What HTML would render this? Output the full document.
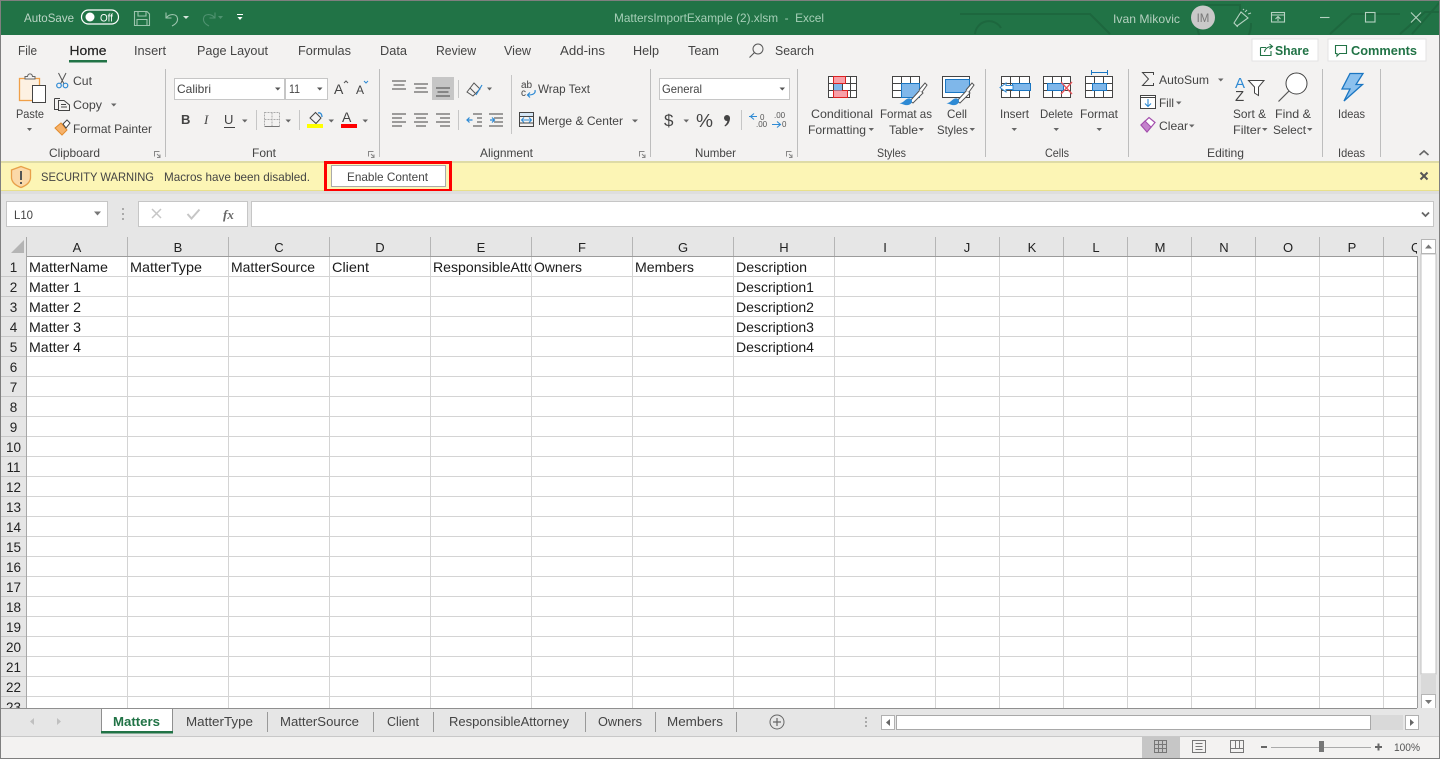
<!DOCTYPE html>
<html><head><meta charset="utf-8"><title>MattersImportExample (2).xlsm - Excel</title>
<style>
html,body{margin:0;padding:0;background:#e6e6e6;overflow:hidden}
svg{display:block;font-family:"Liberation Sans",sans-serif}
text{white-space:pre}
.r{font-size:12px;fill:#444}
.tb{font-size:13px;fill:#444}
.c{font-size:14px;fill:#1a1a1a}
.h{font-size:13px;fill:#222;text-anchor:middle}
.n{font-size:13.5px;fill:#222;text-anchor:middle}
.s{font-size:13px;fill:#555}
.crisp line,.crisp rect,.crisp path{shape-rendering:crispEdges}
</style></head><body>
<svg width="1440" height="759" viewBox="0 0 1440 759" xmlns="http://www.w3.org/2000/svg">
<defs>
<clipPath id="ce"><rect x="431" y="257" width="100" height="20"/></clipPath>
<clipPath id="cq"><rect x="1384" y="237" width="33" height="20"/></clipPath>
<clipPath id="tb"><rect x="960" y="1" width="479" height="34"/></clipPath>
</defs>

<rect width="1440" height="759" fill="#e6e6e6"/>
<!-- title bar -->
<rect x="0" y="0" width="1440" height="35" fill="#217346"/>
<g clip-path="url(#tb)" fill="none" stroke="#1d673e" stroke-width="2">
<path d="M960 14H1090L1110 34M1205 5L1240 5 1240 18 M1205 5a27 27 0 1 0 46 18M1400 34L1425 12H1440M1330 34L1352 14H1400M975 34a14 14 0 0 1 26-6"/>
<path d="M1440 2L1412 34"/>
</g>
<text x="24" y="22" font-size="12" fill="#bcd5c6" textLength="50" lengthAdjust="spacingAndGlyphs">AutoSave</text>
<rect x="81.500" y="10" width="37" height="14" rx="7" fill="#217346" stroke="#fff" stroke-width="1.200"/>
<circle cx="90" cy="17" r="4.500" fill="#fff"/>
<text x="100" y="21.500" font-size="11" fill="#fff" textLength="13" lengthAdjust="spacingAndGlyphs">Off</text>
<g fill="none" stroke="#9cc4ad" stroke-width="1.100">
<path d="M134.500 11.500H147L149.500 14V25.500H134.500ZM138 11.500V16H146V11.500M137 25.500V19.500H147V25.500"/>
<path d="M166 12.500V18H171.500M166.500 17.500C170 13.500 177 13.500 177.500 18.500C178 22 175 24.500 172 26"/>
</g>
<path d="M183 16h6l-3 3z" fill="#d5e5db"/>
<path d="M215 12.500V18H209.500M214.500 17.500C211 13.500 204 13.500 203.500 18.500C203 22 206 24.500 209 26" fill="none" stroke="#4f9270" stroke-width="1.100"/>
<path d="M218 16h5l-2.500 3z" fill="#4f9270"/>
<path d="M237 14h6v1h-6zM237.500 17h5l-2.500 3z" fill="#fff"/>
<text x="614" y="22" font-size="12" fill="#a6cfb7" textLength="210" lengthAdjust="spacingAndGlyphs">MattersImportExample (2).xlsm  -  Excel</text>
<text x="1113" y="23" font-size="12" fill="#b4d0bf" textLength="67" lengthAdjust="spacingAndGlyphs">Ivan Mikovic</text>
<circle cx="1203" cy="17.500" r="12" fill="#c9c9c9"/>
<text x="1203" y="22" font-size="11.500" fill="#777" text-anchor="middle">IM</text>
<g fill="none" stroke="#b5d2c1" stroke-width="1.100">
<path d="M1234 23L1241 12 1248 18 1237 26ZM1238 25l-1 2M1245 12l2-2M1248 14l3-1M1243 10l1-1"/>
<rect x="1271.500" y="12.500" width="13" height="9.500"/><path d="M1271.500 15H1284.500M1278 21v-4M1275.500 19l2.500-2.500 2.500 2.500"/>
<path d="M1320 17.500H1329.500"/>
<rect x="1365.500" y="12.500" width="9.500" height="9.500"/>
<path d="M1411 12.500L1421 22.500M1421 12.500L1411 22.500"/>
</g>

<!-- ribbon -->
<rect x="0" y="35" width="1440" height="127" fill="#f3f2f1"/>
<g class="tb">
<text x="18" y="55" textLength="19" lengthAdjust="spacingAndGlyphs">File</text>
<text x="69.500" y="55" textLength="37" lengthAdjust="spacingAndGlyphs" style="fill:#222;font-weight:400;stroke:#222;stroke-width:.2">Home</text>
<text x="134" y="55" textLength="32" lengthAdjust="spacingAndGlyphs">Insert</text>
<text x="197" y="55" textLength="71" lengthAdjust="spacingAndGlyphs">Page Layout</text>
<text x="298" y="55" textLength="53" lengthAdjust="spacingAndGlyphs">Formulas</text>
<text x="380" y="55" textLength="27" lengthAdjust="spacingAndGlyphs">Data</text>
<text x="436" y="55" textLength="40" lengthAdjust="spacingAndGlyphs">Review</text>
<text x="504" y="55" textLength="27" lengthAdjust="spacingAndGlyphs">View</text>
<text x="560" y="55" textLength="45" lengthAdjust="spacingAndGlyphs">Add-ins</text>
<text x="633" y="55" textLength="26" lengthAdjust="spacingAndGlyphs">Help</text>
<text x="688" y="55" textLength="31" lengthAdjust="spacingAndGlyphs">Team</text>
<text x="775" y="55" textLength="39" lengthAdjust="spacingAndGlyphs">Search</text>
</g>
<rect x="69" y="60" width="38" height="2.500" fill="#217346"/>
<circle cx="758" cy="49" r="5" fill="none" stroke="#555" stroke-width="1"/><path d="M754.500 52.500L749.500 57.500" stroke="#555" stroke-width="1.100"/>

<rect x="1252" y="39" width="66" height="22" fill="#fff" stroke="#e3e3e3"/>
<rect x="1328" y="39" width="98" height="22" fill="#fff" stroke="#e3e3e3"/>
<path d="M1260.500 47.500H1266M1260.500 47.500V55.500H1271V51M1264.500 52C1265 48.500 1268 46.500 1272 46.500M1269.500 44L1272.500 46.500 1269.500 49" fill="none" stroke="#217346" stroke-width="1.100"/>
<text x="1275" y="55" font-size="13" font-weight="700" fill="#217346" textLength="34" lengthAdjust="spacingAndGlyphs">Share</text>
<path d="M1335.500 45.500H1346.500V53.500H1339.500L1337 56V53.500H1335.500Z" fill="none" stroke="#217346" stroke-width="1.100"/>
<text x="1351" y="55" font-size="13" font-weight="700" fill="#217346" textLength="66" lengthAdjust="spacingAndGlyphs">Comments</text>

<!-- separators -->
<g stroke="#bdbdbd" class="crisp">
<line x1="165.500" y1="69" x2="165.500" y2="157"/><line x1="379.500" y1="69" x2="379.500" y2="157"/>
<line x1="650.500" y1="69" x2="650.500" y2="157"/><line x1="797.500" y1="69" x2="797.500" y2="157"/>
<line x1="985.500" y1="69" x2="985.500" y2="157"/><line x1="1128.500" y1="69" x2="1128.500" y2="157"/>
<line x1="1322.500" y1="69" x2="1322.500" y2="157"/><line x1="1380.500" y1="69" x2="1380.500" y2="157"/>
<line x1="256.500" y1="110" x2="256.500" y2="130" stroke="#c6c6c6"/><line x1="299.500" y1="110" x2="299.500" y2="130" stroke="#c6c6c6"/>
<line x1="511.500" y1="75" x2="511.500" y2="134" stroke="#c6c6c6"/><line x1="741.500" y1="110" x2="741.500" y2="130" stroke="#c6c6c6"/>
<line x1="458.500" y1="110" x2="458.500" y2="130" stroke="#c6c6c6"/><line x1="458.500" y1="80" x2="458.500" y2="98" stroke="#c6c6c6"/>
</g>

<!-- group labels -->
<g class="r" font-size="12">
<text x="49" y="157" textLength="51" lengthAdjust="spacingAndGlyphs">Clipboard</text>
<text x="252" y="157" textLength="24" lengthAdjust="spacingAndGlyphs">Font</text>
<text x="480" y="157" textLength="53" lengthAdjust="spacingAndGlyphs">Alignment</text>
<text x="695" y="157" textLength="41" lengthAdjust="spacingAndGlyphs">Number</text>
<text x="877" y="157" textLength="29" lengthAdjust="spacingAndGlyphs">Styles</text>
<text x="1045" y="157" textLength="24" lengthAdjust="spacingAndGlyphs">Cells</text>
<text x="1207" y="157" textLength="37" lengthAdjust="spacingAndGlyphs">Editing</text>
<text x="1338" y="157" textLength="27" lengthAdjust="spacingAndGlyphs">Ideas</text>
</g>
<!-- launchers -->
<g fill="none" stroke="#888" stroke-width="1">
<path d="M154.500 156.500V151.500H159.500M157 154l3 3M160 154.500V157.500H157"/>
<path d="M368.500 156.500V151.500H373.500M371 154l3 3M374 154.500V157.500H371"/>
<path d="M639.500 156.500V151.500H644.500M642 154l3 3M645 154.500V157.500H642"/>
<path d="M786.500 156.500V151.500H791.500M789 154l3 3M792 154.500V157.500H789"/>
</g>
<path d="M1419.500 155L1424 151 1428.500 155" fill="none" stroke="#666" stroke-width="1.600"/>

<!-- clipboard -->
<rect x="19.500" y="78.500" width="20" height="22" fill="#fdf1e2" stroke="#f0a049" stroke-width="1.300"/>
<path d="M25 79V76.500H27.500C28 73 32 73 32.500 76.500H35V79Z" fill="#f3f2f1" stroke="#666"/>
<rect x="32.500" y="85.500" width="13" height="17" fill="#fff" stroke="#444"/>
<text class="r" x="16" y="118" textLength="28" lengthAdjust="spacingAndGlyphs">Paste</text>
<path d="M27 128h5l-2.500 3z" fill="#666"/>
<path d="M58.500 73L64 84M66 73L60.500 84" stroke="#555" fill="none"/>
<circle cx="59" cy="85.500" r="2.300" fill="none" stroke="#2e8ad4" stroke-width="1.200"/><circle cx="65.500" cy="85.500" r="2.300" fill="none" stroke="#2e8ad4" stroke-width="1.200"/>
<text class="r" x="73" y="85" textLength="19" lengthAdjust="spacingAndGlyphs">Cut</text>
<path d="M54.500 98.500H60M54.500 98.500V109.500H58M58.500 100.500H64L69.500 105V110.500H58.500ZM61 104.500H66M61 107H67" fill="none" stroke="#444"/>
<text class="r" x="73" y="109" textLength="29" lengthAdjust="spacingAndGlyphs">Copy</text>
<path d="M111 103.500h5.500l-2.700 3z" fill="#666"/>
<path d="M55 128L61 123 67 130 62 135C60 133 58 131 55 128Z" fill="#f6b26b" stroke="#e38b2c"/>
<path d="M63 124L67 120 70 123 66 128Z" fill="#fff" stroke="#444"/>
<text class="r" x="73" y="133" textLength="79" lengthAdjust="spacingAndGlyphs">Format Painter</text>

<!-- font -->
<rect x="174.500" y="78.500" width="110" height="21" fill="#fff" stroke="#c6c6c6"/>
<rect x="285.500" y="78.500" width="42" height="21" fill="#fff" stroke="#c6c6c6"/>
<text class="r" x="177" y="93" textLength="34" lengthAdjust="spacingAndGlyphs">Calibri</text>
<text class="r" x="289" y="93" textLength="11" lengthAdjust="spacingAndGlyphs">11</text>
<path d="M275 87.500h5.500l-2.700 3zM317 87.500h5.500l-2.700 3z" fill="#555"/>
<text x="334" y="94" font-size="14" fill="#444">A</text><path d="M344 83l2-2 2 2" fill="none" stroke="#555"/>
<text x="356" y="94" font-size="12" fill="#444">A</text><path d="M364 81l2 2 2-2" fill="none" stroke="#2e8ad4"/>
<text x="181" y="124" font-size="13" font-weight="700" fill="#444">B</text>
<text x="204" y="124" font-size="13" font-style="italic" fill="#444" font-family="Liberation Serif">I</text>
<text x="224" y="124" font-size="13" fill="#444">U</text><path d="M224 127.500H235" stroke="#444"/>
<path d="M242 119.500h5.500l-2.700 3zM285.500 119.500h5.500l-2.700 3zM328.500 119.500h5.500l-2.700 3zM362.500 119.500h5.500l-2.700 3z" fill="#666"/>
<path d="M264.500 112.500H279.500V126.500H264.500ZM272 112.500V126.500M264.500 119.500H279.500" fill="none" stroke="#aaa" stroke-dasharray="2 1"/>
<path d="M264.500 126.500H279.500" stroke="#777"/>
<path d="M310 118L315.500 112.500 321 118 316 123.500Z" fill="#f3f2f1" stroke="#444"/><path d="M318 113c3-1 4 2 4 4" fill="none" stroke="#2e8ad4" stroke-width="1.300"/>
<rect x="307" y="124" width="16" height="4" fill="#ffff00"/>
<text x="342" y="122" font-size="14" fill="#444">A</text>
<rect x="341" y="124" width="16" height="4" fill="#ff0000"/>

<!-- alignment -->
<rect x="432" y="77" width="22" height="23" fill="#c6c6c6"/>
<g stroke="#444" class="crisp">
<path d="M392 81h14M393.500 85h11M392 89h14"/>
<path d="M414 84h14M415.500 88h11M414 92h14"/>
<path d="M436 88h14M437.500 92h11M436 96h14"/>
<path d="M392 114h14M392 118h10M392 122h14M392 126h10"/>
<path d="M414 114h14M416 118h10M414 122h14M416 126h10"/>
<path d="M436 114h14M440 118h10M436 122h14M440 126h10"/>
<path d="M473 114h9M477 118h5M477 122h5M473 126h9"/>
<path d="M489 114h14M494 118h9M494 122h9M489 126h14"/>
</g>
<path d="M466.500 120h6m-3-2.500l-2.500 2.500 2.500 2.500M490 120h4m-2-2.500l2.500 2.500-2.500 2.500" fill="none" stroke="#2e8ad4" stroke-width="1.200"/>
<path d="M467 92L474 83 480 89 473 96ZM470 88l5 5" fill="none" stroke="#555"/><path d="M476 95L482 85" stroke="#2e8ad4" stroke-width="1.200"/>
<path d="M487 87.500h5l-2.500 3z" fill="#666"/>
<text x="521" y="88" font-size="10" fill="#444">ab</text><text x="521" y="96" font-size="10" fill="#444">c</text>
<path d="M535 90c1 4-3 5-7 5m2-2.500L527.500 95l2.500 2.500" fill="none" stroke="#2e8ad4" stroke-width="1.200"/>
<text class="r" x="538" y="93" textLength="52" lengthAdjust="spacingAndGlyphs">Wrap Text</text>
<rect x="519.500" y="112.500" width="14" height="14" fill="none" stroke="#444"/><path d="M519.500 116.500H533.500M519.500 123H533.500" stroke="#444"/><rect x="520" y="113" width="13" height="3" fill="#d5e6f5"/><path d="M522 120H531M524 117.500L521.500 120 524 122.500M529 117.500L531.500 120 529 122.500" fill="none" stroke="#2e8ad4"/>
<text class="r" x="538" y="125" textLength="85" lengthAdjust="spacingAndGlyphs">Merge &amp; Center</text>
<path d="M632 119.500h6l-3 3z" fill="#666"/>

<!-- number -->
<rect x="659.500" y="78.500" width="130" height="21" fill="#fff" stroke="#c6c6c6"/>
<text class="r" x="662" y="93" textLength="40" lengthAdjust="spacingAndGlyphs">General</text>
<path d="M779.500 87.500h5.500l-2.700 3z" fill="#555"/>
<text x="664" y="126" font-size="17" fill="#444">$</text>
<path d="M683.500 119.500h5.500l-2.700 3z" fill="#666"/>
<text x="696" y="127" font-size="18" fill="#444" textLength="17" lengthAdjust="spacingAndGlyphs">%</text>
<circle cx="727" cy="118" r="3" fill="#444"/><path d="M730 118c0 4-2 7-5 8.500l-.5-1c2-1.500 3-3.500 3-6z" fill="#444"/>
<text x="760" y="120" font-size="8" fill="#555">0</text><text x="756" y="127" font-size="8" fill="#555">.00</text>
<path d="M749 116.500h8m-3-3l-3.500 3 3.500 3" fill="none" stroke="#2e8ad4" stroke-width="1.100"/>
<text x="774" y="118" font-size="8" fill="#555">.00</text><text x="782" y="127" font-size="8" fill="#555">0</text>
<path d="M772 124.500h8m-3-3l3.500 3-3.500 3" fill="none" stroke="#2e8ad4" stroke-width="1.100"/>

<!-- styles -->
<g class="crisp">
<rect x="828.500" y="76.500" width="28" height="21" fill="#fff" stroke="#444"/>
<path d="M833.500 76.500V97.500M842.500 76.500V97.500M850.500 76.500V97.500M828.500 83.500H856.500M828.500 90.500H856.500" stroke="#444" fill="none"/>
<rect x="833.500" y="76.500" width="12" height="7" fill="#f8a0a8" stroke="#d22"/>
<rect x="833.500" y="90.500" width="14" height="7" fill="#f8a0a8" stroke="#d22"/>
<rect x="834" y="84" width="8" height="6.500" fill="#7fb7ea"/>
<rect x="892.500" y="76.500" width="27" height="21" fill="#fff" stroke="#444"/>
<path d="M901.500 76.500V97.500M910.500 76.500V97.500M892.500 83.500H919.500M892.500 90.500H919.500" stroke="#444" fill="none"/>
<rect x="901.500" y="83.500" width="18" height="14" fill="#7fb7ea" stroke="#1a76c2"/>
<rect x="942.500" y="76.500" width="27" height="21" fill="#fff" stroke="#444"/>
<rect x="945.500" y="79.500" width="24" height="13" fill="#7fb7ea" stroke="#1a76c2"/>
</g>
<path d="M910 101L920 90 923 93 913 103Z" fill="#fff" stroke="#555"/><path d="M919 90L925 83 927 85 922 92" fill="#fff" stroke="#555"/><path d="M899 103C904 104 906 96 911 99 914 102 910 106 905 105Z" fill="#2e8ad4"/>
<path d="M957 101L967 90 970 93 960 103Z" fill="#fff" stroke="#555"/><path d="M966 90L972 83 974 85 969 92" fill="#fff" stroke="#555"/><path d="M946 103C951 104 953 96 958 99 961 102 957 106 952 105Z" fill="#2e8ad4"/>
<g class="r">
<text x="811" y="118" textLength="62" lengthAdjust="spacingAndGlyphs">Conditional</text>
<text x="808" y="134" textLength="58" lengthAdjust="spacingAndGlyphs">Formatting</text>
<text x="880" y="118" textLength="52" lengthAdjust="spacingAndGlyphs">Format as</text>
<text x="889" y="134" textLength="29" lengthAdjust="spacingAndGlyphs">Table</text>
<text x="947" y="118" textLength="20" lengthAdjust="spacingAndGlyphs">Cell</text>
<text x="937" y="134" textLength="31" lengthAdjust="spacingAndGlyphs">Styles</text>
</g>
<path d="M868.500 128h5.500l-2.700 3zM918.500 128h5.500l-2.700 3zM969.500 128h5.500l-2.700 3z" fill="#666"/>

<!-- cells -->
<g class="crisp">
<rect x="1001.500" y="76.500" width="28" height="21" fill="#fff" stroke="#444"/>
<path d="M1001.500 83.500H1029.500M1001.500 90.500H1029.500M1010.500 76.500V97.500M1019.500 76.500V97.500" stroke="#444" fill="none"/>
<rect x="1012.500" y="83.500" width="18" height="7" fill="#7fb7ea" stroke="#1a76c2"/>
<rect x="1043.500" y="76.500" width="27" height="21" fill="#fff" stroke="#444"/>
<path d="M1043.500 83.500H1070.500M1043.500 90.500H1070.500M1052.500 76.500V97.500M1061.500 76.500V97.500" stroke="#444" fill="none"/>
<rect x="1047.500" y="83.500" width="16" height="7" fill="#7fb7ea" stroke="#1a76c2"/>
<rect x="1085.500" y="76.500" width="27" height="21" fill="#fff" stroke="#444"/>
<path d="M1085.500 83.500H1112.500M1085.500 90.500H1112.500M1094.500 76.500V97.500M1103.500 76.500V97.500" stroke="#444" fill="none"/>
<rect x="1092.500" y="83.500" width="14" height="7" fill="#7fb7ea" stroke="#1a76c2"/>
<path d="M1091.500 72.500H1107.500M1091.500 70V75M1107.500 70V75" stroke="#1a76c2" fill="none"/>
</g>
<path d="M1000 87.500L1006 83V85.500H1013V89.500H1006V92Z" fill="#fff" stroke="#2e8ad4"/>
<path d="M1061 82L1072 94M1072 82L1061 94" stroke="#e8545a" stroke-width="1.300"/>
<g class="r">
<text x="1000" y="118" textLength="29" lengthAdjust="spacingAndGlyphs">Insert</text>
<text x="1040" y="118" textLength="33" lengthAdjust="spacingAndGlyphs">Delete</text>
<text x="1080" y="118" textLength="38" lengthAdjust="spacingAndGlyphs">Format</text>
</g>
<path d="M1011.500 128h5.500l-2.700 3zM1053.500 128h5.500l-2.700 3zM1096.500 128h5.500l-2.700 3z" fill="#666"/>

<!-- editing -->
<path d="M1153.500 75V72.500H1142.500L1148.500 79 1142.500 85.500H1153.500V83" fill="none" stroke="#444"/>
<text class="r" x="1159" y="84" textLength="50" lengthAdjust="spacingAndGlyphs">AutoSum</text>
<path d="M1218 78.500h5.500l-2.700 3z" fill="#666"/>
<rect x="1140.500" y="95.500" width="15" height="13" fill="#fff" stroke="#444"/><path d="M1140.500 97.500H1155.500" stroke="#444"/>
<path d="M1148 99V106M1145 103.500l3 3 3-3" fill="none" stroke="#2e8ad4" stroke-width="1.100"/>
<text class="r" x="1159" y="107" textLength="15" lengthAdjust="spacingAndGlyphs">Fill</text>
<path d="M1176 101.500h5.500l-2.700 3z" fill="#666"/>
<path d="M1141 125L1149 117.500 1155 122.500 1147 132Z" fill="#fff" stroke="#a34ead" stroke-width="1.200"/><path d="M1141 125L1145 121 1151 127 1147 132Z" fill="#c482cc" stroke="#a34ead"/>
<text class="r" x="1159" y="130" textLength="29" lengthAdjust="spacingAndGlyphs">Clear</text>
<path d="M1189 124.500h5.500l-2.700 3z" fill="#666"/>
<text x="1235" y="88" font-size="15" fill="#2e8ad4">A</text><text x="1235" y="101" font-size="15" fill="#444">Z</text>
<path d="M1248.500 80.500H1264L1258.500 87V95.500L1254.500 93V87Z" fill="#fff" stroke="#444"/>
<circle cx="1296.500" cy="83.500" r="10.500" fill="#fff" stroke="#444"/><path d="M1289 91L1278.500 101.500" stroke="#555" stroke-width="1.200"/>
<g class="r">
<text x="1233" y="118" textLength="33" lengthAdjust="spacingAndGlyphs">Sort &amp;</text>
<text x="1233" y="134" textLength="28" lengthAdjust="spacingAndGlyphs">Filter</text>
<text x="1275" y="118" textLength="36" lengthAdjust="spacingAndGlyphs">Find &amp;</text>
<text x="1273" y="134" textLength="33" lengthAdjust="spacingAndGlyphs">Select</text>
</g>
<path d="M1262 128h5.500l-2.700 3zM1307 128h5.500l-2.700 3z" fill="#666"/>
<path d="M1350 73.500H1363L1356 84.500H1362.500L1344 101 1350 89H1342Z" fill="#8cc1ee" stroke="#1a76c2" stroke-width="1.300"/>
<text class="r" x="1338" y="118" textLength="27" lengthAdjust="spacingAndGlyphs">Ideas</text>

<!-- message bar -->
<rect x="0" y="162" width="1440" height="29" fill="#fcf5b5"/>
<rect x="0" y="161" width="1440" height="2" fill="#dedba6"/>
<rect x="0" y="190" width="1440" height="1" fill="#e8e08c"/>
<path d="M21 166.500L30.500 170V178C30 183 25 186 21 187.500 17 186 12 183 11.500 178V170Z" fill="#fbd9a8" stroke="#e8a04a" stroke-width="1.300"/>
<path d="M20 171h2v9h-2zM20 182h2v2h-2z" fill="#555"/>
<text x="41" y="181" font-size="12" fill="#444" textLength="113" lengthAdjust="spacingAndGlyphs">SECURITY WARNING</text>
<text x="164" y="181" font-size="12" fill="#444" textLength="146" lengthAdjust="spacingAndGlyphs">Macros have been disabled.</text>
<rect x="325.500" y="162.500" width="125" height="28" fill="#fcf5b5" stroke="#f00" stroke-width="3"/>
<rect x="331.500" y="165.500" width="114" height="21" fill="#fff" stroke="#aaa"/>
<text x="347" y="181" font-size="12" fill="#444" textLength="81" lengthAdjust="spacingAndGlyphs">Enable Content</text>
<path d="M1420.500 172.500L1427.500 179.500M1427.500 172.500L1420.500 179.500" stroke="#555" stroke-width="2"/>

<!-- formula bar -->
<rect x="0" y="191" width="1440" height="46" fill="#e6e6e6"/>
<rect x="0" y="191" width="1440" height="3" fill="#dedede"/>
<rect x="6.500" y="201.500" width="101" height="25" fill="#fff" stroke="#c6c6c6"/>
<text x="14" y="219" font-size="12" fill="#444" textLength="19" lengthAdjust="spacingAndGlyphs">L10</text>
<path d="M94 211.500h7l-3.500 4z" fill="#777"/>
<path d="M122 208h2v2h-2zM122 213h2v2h-2zM122 218h2v2h-2z" fill="#aaa"/>
<rect x="138.500" y="201.500" width="109" height="25" fill="#fff" stroke="#c6c6c6"/>
<path d="M152 209L161 218M161 209L152 218" stroke="#c6c6c6" stroke-width="1.500"/>
<path d="M187.500 214L191.500 218.500 199.500 209.500" fill="none" stroke="#c6c6c6" stroke-width="2"/>
<text x="223" y="219" font-size="13" font-style="italic" font-weight="700" font-family="Liberation Serif" fill="#666">fx</text>
<rect x="251.500" y="201.500" width="1182" height="25" fill="#fff" stroke="#c6c6c6"/>
<path d="M1422 212.500L1425.500 216 1429 212.500" fill="none" stroke="#666" stroke-width="1.800"/>

<!-- grid -->
<rect x="27" y="257" width="1390" height="451" fill="#fff"/>
<g class="crisp" stroke="#d4d4d4">
<path d="M127.500 257V708M228.500 257V708M329.500 257V708M430.500 257V708M531.500 257V708M632.500 257V708M733.500 257V708M834.500 257V708M935.500 257V708M999.500 257V708M1063.500 257V708M1127.500 257V708M1191.500 257V708M1255.500 257V708M1319.500 257V708M1383.500 257V708" fill="none"/>
<path d="M27 276.500H1417M27 296.500H1417M27 316.500H1417M27 336.500H1417M27 356.500H1417M27 376.500H1417M27 396.500H1417M27 416.500H1417M27 436.500H1417M27 456.500H1417M27 476.500H1417M27 496.500H1417M27 516.500H1417M27 536.500H1417M27 556.500H1417M27 576.500H1417M27 596.500H1417M27 616.500H1417M27 636.500H1417M27 656.500H1417M27 676.500H1417M27 696.500H1417" fill="none"/>
</g>
<!-- headers -->
<rect x="0" y="237" width="1417" height="20" fill="#e6e6e6"/>
<rect x="0" y="257" width="27" height="451" fill="#e6e6e6"/>
<path d="M11 253L24 240V253Z" fill="#b4b4b4"/>
<g class="crisp" fill="none">
<path d="M27 256.500H1417" stroke="#9b9b9b"/>
<path d="M26.500 237V708" stroke="#a8a8a8"/>
<path d="M1417.500 256V708" stroke="#9b9b9b"/>
<path d="M127.500 237V256M228.500 237V256M329.500 237V256M430.500 237V256M531.500 237V256M632.500 237V256M733.500 237V256M834.500 237V256M935.500 237V256M999.500 237V256M1063.500 237V256M1127.500 237V256M1191.500 237V256M1255.500 237V256M1319.500 237V256M1383.500 237V256" stroke="#b5b5b5"/>
<path d="M0 276.500H26M0 296.500H26M0 316.500H26M0 336.500H26M0 356.500H26M0 376.500H26M0 396.500H26M0 416.500H26M0 436.500H26M0 456.500H26M0 476.500H26M0 496.500H26M0 516.500H26M0 536.500H26M0 556.500H26M0 576.500H26M0 596.500H26M0 616.500H26M0 636.500H26M0 656.500H26M0 676.500H26M0 696.500H26" stroke="#c8c8c8"/>
</g>
<g class="h">
<text x="77" y="252">A</text><text x="178" y="252">B</text><text x="279" y="252">C</text><text x="380" y="252">D</text><text x="481" y="252">E</text><text x="582" y="252">F</text><text x="683" y="252">G</text><text x="784" y="252">H</text><text x="885" y="252">I</text><text x="967" y="252">J</text><text x="1032" y="252">K</text><text x="1096" y="252">L</text><text x="1160" y="252">M</text><text x="1224" y="252">N</text><text x="1288" y="252">O</text><text x="1352" y="252">P</text><text x="1416" y="252" clip-path="url(#cq)">Q</text>
</g>
<g class="n">
<text x="13.500" y="272">1</text><text x="13.500" y="292">2</text><text x="13.500" y="312">3</text><text x="13.500" y="332">4</text><text x="13.500" y="352">5</text><text x="13.500" y="372">6</text><text x="13.500" y="392">7</text><text x="13.500" y="412">8</text><text x="13.500" y="432">9</text><text x="13.500" y="452">10</text><text x="13.500" y="472">11</text><text x="13.500" y="492">12</text><text x="13.500" y="512">13</text><text x="13.500" y="532">14</text><text x="13.500" y="552">15</text><text x="13.500" y="572">16</text><text x="13.500" y="592">17</text><text x="13.500" y="612">18</text><text x="13.500" y="632">19</text><text x="13.500" y="652">20</text><text x="13.500" y="672">21</text><text x="13.500" y="692">22</text><text x="13.500" y="712">23</text>
</g>
<g class="c">
<text x="29" y="272" textLength="79" lengthAdjust="spacingAndGlyphs">MatterName</text>
<text x="130" y="272" textLength="72" lengthAdjust="spacingAndGlyphs">MatterType</text>
<text x="231" y="272" textLength="84" lengthAdjust="spacingAndGlyphs">MatterSource</text>
<text x="332" y="272" textLength="37" lengthAdjust="spacingAndGlyphs">Client</text>
<g clip-path="url(#ce)"><text x="433" y="272" textLength="130" lengthAdjust="spacingAndGlyphs">ResponsibleAttorney</text></g>
<text x="534" y="272" textLength="48" lengthAdjust="spacingAndGlyphs">Owners</text>
<text x="635" y="272" textLength="59" lengthAdjust="spacingAndGlyphs">Members</text>
<text x="736" y="272" textLength="71" lengthAdjust="spacingAndGlyphs">Description</text>
<text x="29" y="292" textLength="52" lengthAdjust="spacingAndGlyphs">Matter 1</text>
<text x="29" y="312" textLength="52" lengthAdjust="spacingAndGlyphs">Matter 2</text>
<text x="29" y="332" textLength="52" lengthAdjust="spacingAndGlyphs">Matter 3</text>
<text x="29" y="352" textLength="52" lengthAdjust="spacingAndGlyphs">Matter 4</text>
<text x="736" y="292" textLength="78" lengthAdjust="spacingAndGlyphs">Description1</text>
<text x="736" y="312" textLength="78" lengthAdjust="spacingAndGlyphs">Description2</text>
<text x="736" y="332" textLength="78" lengthAdjust="spacingAndGlyphs">Description3</text>
<text x="736" y="352" textLength="78" lengthAdjust="spacingAndGlyphs">Description4</text>
</g>

<!-- vertical scrollbar -->
<rect x="1418" y="237" width="22" height="471" fill="#e6e6e6"/>
<rect x="1421" y="254" width="15" height="420" fill="#fff" stroke="#c0c0c0"/>
<rect x="1421" y="674" width="15" height="21" fill="#d9d9d9"/>
<rect x="1421.500" y="239.500" width="14" height="14" fill="#fff" stroke="#b5b5b5"/>
<path d="M1425 248.500h7l-3.500-4z" fill="#777"/>
<rect x="1421.500" y="694.500" width="14" height="14" fill="#fff" stroke="#b5b5b5"/>
<path d="M1425 700h7l-3.500 4z" fill="#777"/>

<!-- sheet tabs -->
<rect x="0" y="708" width="1440" height="28" fill="#e6e6e6"/>
<path d="M0 708.500H1417" stroke="#8f8f8f" class="crisp"/>
<path d="M34 718v7l-4-3.500zM57 718v7l4-3.500z" fill="#c0c0c0"/>
<rect x="101.500" y="708.500" width="71" height="23" fill="#fff" stroke="#8f8f8f"/>
<rect x="101" y="731" width="72" height="2.500" fill="#217346"/>
<text x="113" y="726" font-size="13" font-weight="700" fill="#217346" textLength="47" lengthAdjust="spacingAndGlyphs">Matters</text>
<g font-size="13" fill="#444">
<text x="186" y="726" textLength="67" lengthAdjust="spacingAndGlyphs">MatterType</text>
<text x="280" y="726" textLength="79" lengthAdjust="spacingAndGlyphs">MatterSource</text>
<text x="387" y="726" textLength="32" lengthAdjust="spacingAndGlyphs">Client</text>
<text x="449" y="726" textLength="120" lengthAdjust="spacingAndGlyphs">ResponsibleAttorney</text>
<text x="598" y="726" textLength="44" lengthAdjust="spacingAndGlyphs">Owners</text>
<text x="667" y="726" textLength="56" lengthAdjust="spacingAndGlyphs">Members</text>
</g>
<path d="M267.500 712V732M373.500 712V732M433.500 712V732M585.500 712V732M655.500 712V732M736.500 712V732" stroke="#999" class="crisp"/>
<circle cx="777" cy="722" r="7" fill="none" stroke="#666"/><path d="M773 722H781M777 718V726" stroke="#666" stroke-width="1.200"/>
<path d="M865 717h2v2h-2zM865 721h2v2h-2zM865 725h2v2h-2z" fill="#aaa"/>
<rect x="881.500" y="715.500" width="13" height="14" fill="#fff" stroke="#b0b0b0"/><path d="M890 719v7l-4-3.500z" fill="#666"/>
<rect x="896" y="715" width="507" height="15" fill="#d9d9d9"/>
<rect x="896.500" y="715.500" width="474" height="14" fill="#fff" stroke="#a8a8a8"/>
<rect x="1405.500" y="715.500" width="13" height="14" fill="#fff" stroke="#b0b0b0"/><path d="M1410 719v7l4-3.500z" fill="#666"/>

<!-- status bar -->
<rect x="0" y="736" width="1440" height="23" fill="#f3f2f1"/>
<path d="M0 736.500H1440" stroke="#c8c8c8" class="crisp"/>
<rect x="1142" y="737" width="38" height="21" fill="#c6c6c6"/>
<g fill="none" stroke="#777" class="crisp">
<path d="M1154.500 740.500H1166.500V752.500H1154.500ZM1158.500 740.500V752.500M1162.500 740.500V752.500M1154.500 744.500H1166.500M1154.500 748.500H1166.500"/>
<path d="M1192.500 740.500H1205.500V752.500H1192.500ZM1195.500 743.500H1202.500M1195.500 746.500H1202.500M1195.500 749.500H1202.500"/>
<path d="M1230.500 740.500H1243.500V752.500H1230.500ZM1230.500 748.500H1243.500M1235.500 740.500V748.500M1239.500 740.500V748.500"/>
</g>
<path d="M1261 746h6v2h-6zM1375 746h7v2h-7zM1377.500 743.500h2v7h-2z" fill="#666"/>
<rect x="1271" y="747" width="100" height="1" fill="#aaa"/>
<rect x="1319" y="741" width="5" height="11" fill="#777"/>
<text x="1394" y="751" font-size="11" fill="#555" textLength="26" lengthAdjust="spacingAndGlyphs">100%</text>

<!-- window frame -->
<rect x="0.500" y="0.500" width="1439" height="758" fill="none" stroke="#7f7f7f" style="shape-rendering:crispEdges"/>
</svg>
</body></html>
